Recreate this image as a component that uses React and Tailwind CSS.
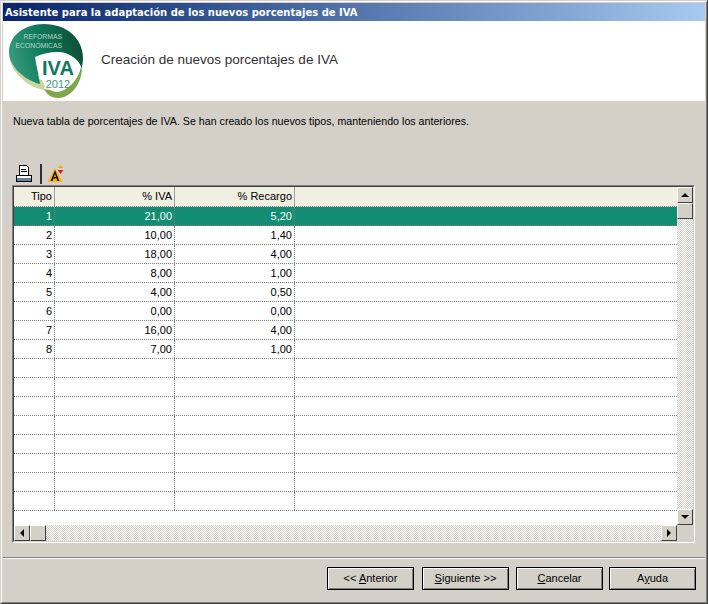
const rows = [
  ["1", "21,00", "5,20"],
  ["2", "10,00", "1,40"],
  ["3", "18,00", "4,00"],
  ["4", "8,00", "1,00"],
  ["5", "4,00", "0,50"],
  ["6", "0,00", "0,00"],
  ["7", "16,00", "4,00"],
  ["8", "7,00", "1,00"],
  ["", "", ""],
  ["", "", ""],
  ["", "", ""],
  ["", "", ""],
  ["", "", ""],
  ["", "", ""],
  ["", "", ""],
  ["", "", ""],
];

const Logo = () => (
  <svg width="85" height="80" viewBox="3 21 85 80" className="shrink-0">
    <defs>
      <linearGradient id="blob" x1="0" y1="0.6" x2="1" y2="0.4">
        <stop offset="0" stopColor="#3a9c7e" />
        <stop offset="0.45" stopColor="#0f7a5c" />
        <stop offset="1" stopColor="#0c4f36" />
      </linearGradient>
    </defs>
    <path d="M9 52 C8 68 24 86 44 90 L46 82 C30 76 18 66 9 52Z" fill="#c4d79f" />
    <path d="M82 68 C82 82 72 98 58 98 C52 98 47 95 44 89 C56 92 72 86 82 68Z" fill="#7fa84a" />
    <path d="M9 52 C9 36 24 24 44 24 C66 24 83 38 83 58 C83 66 80 74 76 78 L36 62 L40 84 C24 80 9 66 9 52Z" fill="url(#blob)" />
    <path d="M35 57 C46 52 58 51 65 53 C74 56 80 62 81 67 C80 76 70 90 58 92 C50 92 44 87 42 80 C38 72 36 64 35 57Z" fill="#fff" />
    <text x="62" y="39" textAnchor="end" fontSize="6.8" fill="#b9d6c6" fontFamily="'Liberation Sans', sans-serif">REFORMAS</text>
    <text x="62" y="48" textAnchor="end" fontSize="6.8" fill="#b9d6c6" fontFamily="'Liberation Sans', sans-serif">ECONÓMICAS</text>
    <text x="58" y="75" textAnchor="middle" fontSize="20" fontWeight="700" fill="#0f7a5c" fontFamily="'Liberation Sans', sans-serif">IVA</text>
    <text x="58" y="88" textAnchor="middle" fontSize="11" fill="#3f9a82" fontFamily="'Liberation Sans', sans-serif">2012</text>
  </svg>
);

const PrinterIcon = () => (
  <svg width="16" height="17" viewBox="0 0 16 17" shapeRendering="crispEdges">
    <path d="M3.5 0.5H10.5L12.5 2.5V10.5H3.5Z" fill="#fff" stroke="#000" />
    <path d="M5 4H10M5 6H11" stroke="#000" />
    <rect x="0.5" y="10.5" width="15" height="6" fill="#6d8296" stroke="#000" />
    <rect x="1" y="11" width="14" height="2" fill="#fff" />
    <path d="M3 10.5H13" stroke="#000" />
  </svg>
);

const WarningIcon = () => (
  <svg width="16" height="18" viewBox="0 0 16 18">
    <path d="M7 3 L14.5 17 H-0.5 Z" fill="#fdb515" />
    <path d="M7 5 L2.6 16 H4.6 L5.5 13.4 H8.5 L9.4 16 H11.4 Z M6 12 L7 9 L8 12 Z" fill="#1a1200" fillRule="evenodd" />
    <path d="M12.5 0 L15.5 3 H9.5Z" fill="#f9a800" />
    <path d="M12.5 9 L15.5 5 H9.5Z" fill="#e02020" />
  </svg>
);

const ScrollBtn = ({ dir }) => (
  <div className="w-4 h-4 shrink-0 flex items-center justify-center bg-[#d4d0c8] border border-t-white border-l-white border-r-[#404040] border-b-[#404040]">
    {dir === "up" && <div className="w-0 h-0 border-x-[4px] border-x-transparent border-b-[4px] border-b-black" />}
    {dir === "down" && <div className="w-0 h-0 border-x-[4px] border-x-transparent border-t-[4px] border-t-black" />}
    {dir === "left" && <div className="w-0 h-0 border-y-[4px] border-y-transparent border-r-[4px] border-r-black" />}
    {dir === "right" && <div className="w-0 h-0 border-y-[4px] border-y-transparent border-l-[4px] border-l-black" />}
  </div>
);

const Thumb = () => (
  <div className="w-4 h-4 shrink-0 bg-[#d4d0c8] border border-t-white border-l-white border-r-[#404040] border-b-[#404040]" />
);

const checker = "bg-[repeating-conic-gradient(#d4d0c8_0_25%,#ffffff_0_50%)] bg-[length:2px_2px]";

const WizardButton = ({ className, children }) => (
  <button className={"w-[87px] h-[23px] bg-[#d4d0c8] border border-black shadow-[inset_1px_1px_0_#fff,inset_-1px_-1px_0_#808080] text-[11px] text-black " + (className || "")}>
    {children}
  </button>
);

const App = () => {
  return (
    <div className="w-[708px] h-[604px] bg-[#d4d0c8] border border-t-[#d4d0c8] border-l-[#d4d0c8] border-r-[#404040] border-b-[#404040] font-['Liberation_Sans',sans-serif] text-black">
      <div className="h-full border border-t-white border-l-white border-r-[#808080] border-b-[#808080] p-px flex flex-col">
        <div className="h-[18px] shrink-0 flex items-center pl-[2px] bg-gradient-to-r from-[#0a246a] to-[#a6caf0] text-white text-[10px] font-bold font-['DejaVu_Sans',sans-serif] whitespace-nowrap">
          Asistente para la adaptación de los nuevos porcentajes de IVA
        </div>

        <div className="h-[80px] shrink-0 bg-white flex items-center">
          <Logo />
          <span className="ml-[13px] text-[13.5px] text-[#303030] -mt-[2px]">Creación de nuevos porcentajes de IVA</span>
        </div>

        <p className="mt-[14px] ml-[10px] text-[10.67px] leading-[13px]">
          Nueva tabla de porcentajes de IVA. Se han creado los nuevos tipos, manteniendo los anteriores.
        </p>

        <div className="mt-[35px] ml-[13px] h-[21px] flex items-center">
          <PrinterIcon />
          <div className="ml-[8px] w-[2px] h-[20px] bg-[#303030]" />
          <div className="ml-[6px]"><WarningIcon /></div>
        </div>

        <div className="mt-[1px] ml-[9px] w-[683px] h-[358px] shrink-0 border border-t-[#808080] border-l-[#808080] border-r-white border-b-white">
          <div className="h-full border border-t-[#404040] border-l-[#404040] border-r-[#d4d0c8] border-b-[#d4d0c8] flex flex-col text-[11px]">
            <div className="flex h-[338px]">
              <div className="flex-1 bg-white">
                <div className="flex h-[20px] bg-[#f1efe2] border-b border-dotted border-b-[#808080]">
                  <div className="w-[41px] pr-[2px] flex items-center justify-end border-r border-[#a0a0a0]">Tipo</div>
                  <div className="w-[120px] pr-[2px] flex items-center justify-end border-r border-[#a0a0a0]">% IVA</div>
                  <div className="w-[120px] pr-[2px] flex items-center justify-end border-r border-[#a0a0a0]">% Recargo</div>
                </div>
                {rows.map((row, i) => (
                  <div
                    key={i}
                    className={"flex h-[19px] border-b border-dotted border-b-[#808080] " + (i === 0 ? "bg-[#128c72] text-white" : "")}
                  >
                    <div className="w-[41px] pr-[2px] flex items-center justify-end border-r border-dotted border-r-[#808080]">{row[0]}</div>
                    <div className="w-[120px] pr-[2px] flex items-center justify-end border-r border-dotted border-r-[#808080]">{row[1]}</div>
                    <div className="w-[120px] pr-[2px] flex items-center justify-end border-r border-dotted border-r-[#808080]">{row[2]}</div>
                  </div>
                ))}
              </div>
              <div className={"w-4 flex flex-col " + checker}>
                <ScrollBtn dir="up" />
                <Thumb />
                <div className="flex-1" />
                <ScrollBtn dir="down" />
              </div>
            </div>
            <div className={"flex h-4 " + checker}>
              <ScrollBtn dir="left" />
              <Thumb />
              <div className="flex-1" />
              <ScrollBtn dir="right" />
              <div className="w-4 bg-[#d4d0c8]" />
            </div>
          </div>
        </div>

        <div className="mt-[14px] h-[2px] shrink-0 border-t border-t-[#808080] border-b border-b-white" />

        <div className="mt-[8px] pl-[324px] flex">
          <WizardButton>&lt;&lt; <u>A</u>nterior</WizardButton>
          <WizardButton className="ml-[8px]"><u>S</u>iguiente &gt;&gt;</WizardButton>
          <WizardButton className="ml-[7px]"><u>C</u>ancelar</WizardButton>
          <WizardButton className="ml-[6px]">A<u>y</u>uda</WizardButton>
        </div>
      </div>
    </div>
  );
};

export default App;
